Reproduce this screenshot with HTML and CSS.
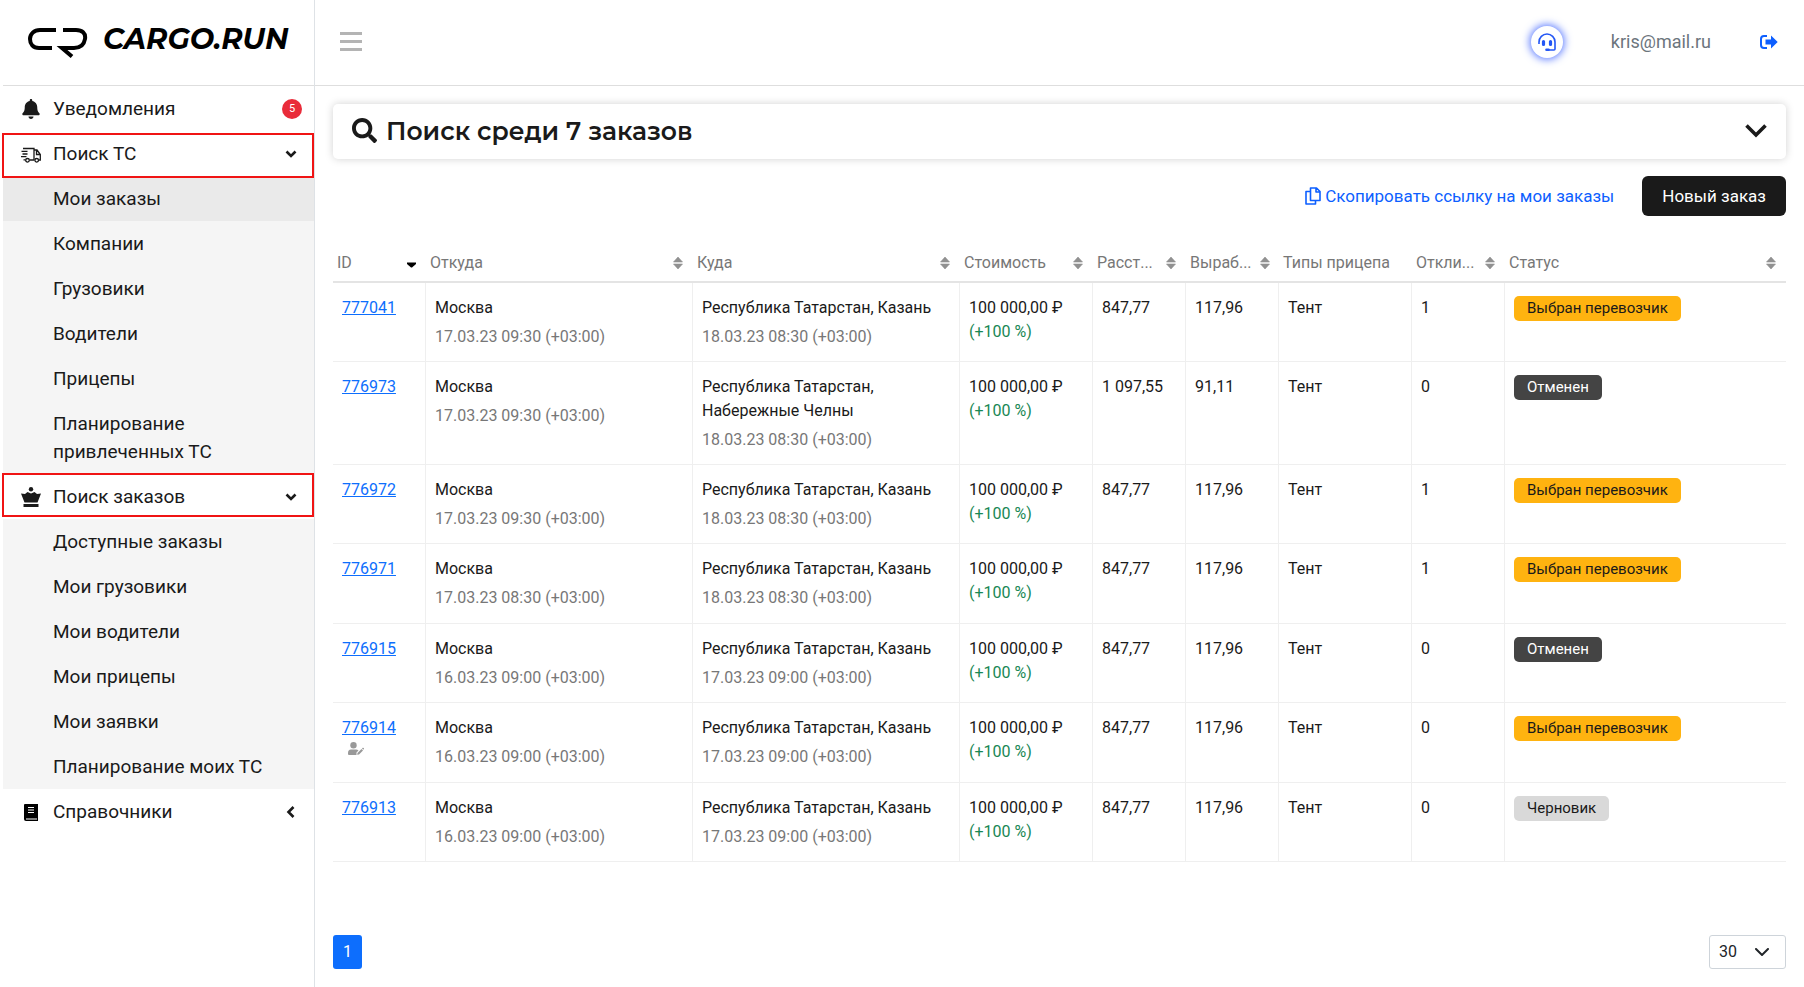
FILE: index.html
```html
<!DOCTYPE html>
<html lang="ru">
<head>
<meta charset="utf-8">
<title>CARGO.RUN — Мои заказы</title>
<link rel="stylesheet" href="styles.css">
</head>
<body>
<svg class="sprite" aria-hidden="true">
  <symbol id="sort" viewBox="0 0 10 12"><path d="M5 0 9.500 5H.5ZM5 12 .5 7h9Z" fill="currentColor" stroke="currentColor" stroke-width=".6" stroke-linejoin="round"/></symbol>
  <symbol id="down" viewBox="0 0 12 8"><path d="M1.500 1.500 6 6l4.500-4.500" fill="none" stroke="currentColor" stroke-width="2.600"/></symbol>
</svg>
<div class="app">
  <aside class="sidebar">
    <a class="logo" href="#">
      <svg class="logo-mark" viewBox="0 0 60 31" fill="none" stroke="#000" stroke-width="4"><path d="M28 3H12C6 3 2 7 2 12s3 9 9 9h13M35 3h13c6 0 10 3 9 9s-5 9-11 9H34l10 8.500"/></svg>
      <span>CARGO.RUN</span>
    </a>
    <nav class="menu">
      <a class="item" href="#"><svg class="icon" viewBox="0 0 448 512" fill="currentColor"><path d="M224 512c35.320 0 63.970-28.650 63.970-64H160.030c0 35.350 28.650 64 63.970 64zm215.390-149.710c-19.320-20.760-55.470-51.990-55.470-154.290 0-77.700-54.480-139.900-127.940-155.160V32c0-17.670-14.320-32-31.980-32s-31.980 14.330-31.980 32v20.840C118.560 68.100 64.080 130.300 64.080 208c0 102.300-36.150 133.530-55.470 154.290-6 6.450-8.660 14.160-8.610 21.710.11 16.400 12.980 32 32.100 32h383.800c19.120 0 32-15.600 32.100-32 .05-7.550-2.610-15.270-8.610-21.710z"/></svg><span>Уведомления</span><span class="count">5</span></a>
      <button class="item marked marked-low" type="button"><svg class="icon" viewBox="0 0 20 20" fill="none" stroke="currentColor" stroke-width="1.300"><path d="M2 4.500h11v11.500M0.500 7.300h6M1.500 10h5M0 12.700h5.500M2.500 15.800h2M8.500 16h5M13 6h3l3.300 4.500V16h-1.500M15.500 6.500v4h3.500"/><circle cx="6.500" cy="16.300" r="1.800"/><circle cx="15.700" cy="16.300" r="1.800"/></svg><span>Поиск ТС</span><svg class="arrow"><use href="#down"/></svg></button>
      <div class="submenu">
        <a class="item active" href="#">Мои заказы</a>
        <a class="item" href="#">Компании</a>
        <a class="item" href="#">Грузовики</a>
        <a class="item" href="#">Водители</a>
        <a class="item" href="#">Прицепы</a>
        <a class="item" href="#">Планирование привлеченных ТС</a>
      </div>
      <button class="item marked marked-high" type="button"><svg class="icon" viewBox="0 0 20 20" fill="currentColor"><circle cx="10" cy="2.200" r="2.200"/><path d="M0 6.500 4 7l2.500-2L10 6.500l3.500-1.500L16 7l4-.5L16.500 15.500h-13ZM2.500 17h15v3h-15Z"/></svg><span>Поиск заказов</span><svg class="arrow"><use href="#down"/></svg></button>
      <div class="submenu">
        <a class="item" href="#">Доступные заказы</a>
        <a class="item" href="#">Мои грузовики</a>
        <a class="item" href="#">Мои водители</a>
        <a class="item" href="#">Мои прицепы</a>
        <a class="item" href="#">Мои заявки</a>
        <a class="item" href="#">Планирование моих ТС</a>
      </div>
      <button class="item" type="button"><svg class="icon" viewBox="0 0 20 20"><path d="M4 2h13v17H5q-2 0-2-2V3q0-1 1-1Z" fill="#000"/><path d="M7 5.500h6M7 8h6M7 10.500h6M5 17h11" stroke="#fff" stroke-width="1.200"/></svg><span>Справочники</span><svg class="arrow" viewBox="0 0 12 12"><path d="M8.500 1 3.500 6l5 5" fill="none" stroke="currentColor" stroke-width="2.600"/></svg></button>
    </nav>
  </aside>
  <div class="page">
    <header class="topbar">
      <button class="burger" type="button" aria-label="Меню"><i></i><i></i><i></i></button>
      <button class="support" type="button" aria-label="Поддержка"><svg viewBox="0 0 20 20" fill="none" stroke="currentColor" stroke-width="1.600"><path d="M2 12V10a8 8 0 0 1 16 0V17q0 1-1 1h-6"/><path d="M6.500 9.500v3M13.500 9.500v3" stroke-width="3.200" stroke-linecap="round"/><path d="M9.500 17.700h2" stroke-width="2.600" stroke-linecap="round"/></svg></button>
      <span class="email">kris@mail.ru</span>
      <a class="logout" href="#" aria-label="Выйти"><svg viewBox="0 0 18 14"><path d="M7 1H4Q1 1 1 4v6q0 3 3 3h3" fill="none" stroke="currentColor" stroke-width="2"/><path d="M5.500 4.500H11V.5L17.700 7 11 13.500v-4H5.500Z" fill="currentColor"/></svg></a>
    </header>
    <main class="content">
      <button class="search" type="button">
        <svg class="lens" viewBox="0 0 512 512" fill="currentColor"><path d="M505 442.700L405.300 343c-4.500-4.500-10.600-7-17-7H372c27.600-35.300 44-79.700 44-128C416 93.100 322.900 0 208 0S0 93.100 0 208s93.100 208 208 208c48.300 0 92.700-16.400 128-44v16.300c0 6.400 2.500 12.500 7 17l99.700 99.700c9.400 9.400 24.600 9.400 33.900 0l28.300-28.300c9.400-9.400 9.400-24.600.1-34zM208 336c-70.700 0-128-57.200-128-128 0-70.700 57.200-128 128-128 70.700 0 128 57.200 128 128 0 70.700-57.200 128-128 128z"/></svg>
        <span>Поиск среди 7 заказов</span>
        <svg class="expand" viewBox="0 0 22 14" fill="none" stroke="currentColor" stroke-width="3.600"><path d="m1.500 1.500 9.500 9.500 9.500-9.500"/></svg>
      </button>
      <div class="actions">
        <a class="copy" href="#"><svg viewBox="0 0 16 18" fill="none" stroke="currentColor" stroke-width="1.600" stroke-linejoin="round"><path d="M5.500 1h6L15 4.500v9H5.500ZM11 1v4h4M5.500 4.500H1V17h9.500v-3.500"/></svg>Скопировать ссылку на мои заказы</a>
        <button class="create" type="button">Новый заказ</button>
      </div>
      <table class="orders">
        <colgroup><col class="c-id"><col class="c-place"><col class="c-place"><col class="c-mid"><col class="c-small"><col class="c-small"><col class="c-mid"><col class="c-small"><col></colgroup>
        <thead><tr>
          <th><div><span>ID</span><svg class="sorted" viewBox="0 0 9 6"><path d="M0 .5h9V2L5 5.500H4L0 2Z"/></svg></div></th>
          <th><div><span>Откуда</span><svg class="sort"><use href="#sort"/></svg></div></th>
          <th><div><span>Куда</span><svg class="sort"><use href="#sort"/></svg></div></th>
          <th><div><span>Стоимость</span><svg class="sort"><use href="#sort"/></svg></div></th>
          <th><div><span>Расст...</span><svg class="sort"><use href="#sort"/></svg></div></th>
          <th><div><span>Выраб...</span><svg class="sort"><use href="#sort"/></svg></div></th>
          <th><div><span>Типы прицепа</span></div></th>
          <th><div><span>Откли...</span><svg class="sort"><use href="#sort"/></svg></div></th>
          <th><div><span>Статус</span><svg class="sort"><use href="#sort"/></svg></div></th>
        </tr></thead>
        <tbody>
          <tr><td><a href="#">777041</a></td><td>Москва<time>17.03.23 09:30 (+03:00)</time></td><td>Республика Татарстан, Казань<time>18.03.23 08:30 (+03:00)</time></td><td>100 000,00 ₽<em>(+100 %)</em></td><td>847,77</td><td>117,96</td><td>Тент</td><td>1</td><td><span class="tag chosen">Выбран перевозчик</span></td></tr>
          <tr><td><a href="#">776973</a></td><td>Москва<time>17.03.23 09:30 (+03:00)</time></td><td>Республика Татарстан, Набережные Челны<time>18.03.23 08:30 (+03:00)</time></td><td>100 000,00 ₽<em>(+100 %)</em></td><td>1 097,55</td><td>91,11</td><td>Тент</td><td>0</td><td><span class="tag cancelled">Отменен</span></td></tr>
          <tr><td><a href="#">776972</a></td><td>Москва<time>17.03.23 09:30 (+03:00)</time></td><td>Республика Татарстан, Казань<time>18.03.23 08:30 (+03:00)</time></td><td>100 000,00 ₽<em>(+100 %)</em></td><td>847,77</td><td>117,96</td><td>Тент</td><td>1</td><td><span class="tag chosen">Выбран перевозчик</span></td></tr>
          <tr><td><a href="#">776971</a></td><td>Москва<time>17.03.23 08:30 (+03:00)</time></td><td>Республика Татарстан, Казань<time>18.03.23 08:30 (+03:00)</time></td><td>100 000,00 ₽<em>(+100 %)</em></td><td>847,77</td><td>117,96</td><td>Тент</td><td>1</td><td><span class="tag chosen">Выбран перевозчик</span></td></tr>
          <tr><td><a href="#">776915</a></td><td>Москва<time>16.03.23 09:00 (+03:00)</time></td><td>Республика Татарстан, Казань<time>17.03.23 09:00 (+03:00)</time></td><td>100 000,00 ₽<em>(+100 %)</em></td><td>847,77</td><td>117,96</td><td>Тент</td><td>0</td><td><span class="tag cancelled">Отменен</span></td></tr>
          <tr><td><a href="#">776914</a><svg class="editor" viewBox="0 0 16 13" fill="currentColor"><circle cx="5.500" cy="3.200" r="3.200"/><path d="M3 7.500h5q1.500 0 2.500 1L8.500 10.500V13H1q-1 0-1-1v-1q0-3.500 3-3.500ZM9.500 11l4-4L15 8.500l-4 4-1.800.3ZM14 6.500l.7-.7q.5-.3 1 .2t.2 1l-.7.700Z"/></svg></td><td>Москва<time>16.03.23 09:00 (+03:00)</time></td><td>Республика Татарстан, Казань<time>17.03.23 09:00 (+03:00)</time></td><td>100 000,00 ₽<em>(+100 %)</em></td><td>847,77</td><td>117,96</td><td>Тент</td><td>0</td><td><span class="tag chosen">Выбран перевозчик</span></td></tr>
          <tr><td><a href="#">776913</a></td><td>Москва<time>16.03.23 09:00 (+03:00)</time></td><td>Республика Татарстан, Казань<time>17.03.23 09:00 (+03:00)</time></td><td>100 000,00 ₽<em>(+100 %)</em></td><td>847,77</td><td>117,96</td><td>Тент</td><td>0</td><td><span class="tag draft">Черновик</span></td></tr>
        </tbody>
      </table>
      <footer class="pager">
        <button class="page-number" type="button">1</button>
        <div class="size"><select aria-label="Строк на странице"><option>30</option></select><svg viewBox="0 0 14 8" fill="none" stroke="currentColor" stroke-width="2" stroke-linecap="round"><path d="m1 1 6 6 6-6"/></svg></div>
      </footer>
    </main>
  </div>
</div>
</body>
</html>
```
FILE: styles.css
```css
* { box-sizing: border-box; }
body {
  margin: 0;
  background: #fff;
  color: #1a1a1a;
  font: 16px/24px Roboto, "Liberation Sans", sans-serif;
}
button, select { font: inherit; color: inherit; }
button { border: 0; background: none; padding: 0; cursor: pointer; }
a { color: #0d5fff; text-decoration: none; }
svg { flex: none; }
.sprite { display: none; }

.app { display: flex; min-height: 100vh; }
.sidebar {
  width: 315px;
  flex: none;
  padding-left: 3px;
  border-right: 1px solid #dee2e6;
}
.logo {
  display: flex;
  gap: 15px;
  height: 86px;
  padding: 22px 0 0 25px;
  border-bottom: 1px solid #dedede;
  color: #000;
  font: italic 700 29px/34px Montserrat, Inter, sans-serif;
}
.logo-mark { width: 60px; height: 31px; margin-top: 5px; }

.item {
  display: flex;
  align-items: center;
  gap: 12px;
  width: 100%;
  padding: 9px 17px 8px 18px;
  color: #1a1a1a;
  font-size: 19px;
  line-height: 28px;
  text-align: left;
}
.icon { width: 20px; height: 20px; }
.arrow { width: 12px; height: 12px; margin-left: auto; }
.count {
  width: 20px;
  height: 20px;
  margin: 0 -5px 0 auto;
  border-radius: 50%;
  background: #e92c3a;
  color: #fff;
  font-size: 11px;
  line-height: 20px;
  text-align: center;
}
.submenu { background: #f5f5f5; }
.submenu .item { padding-left: 50px; padding-right: 40px; }
.submenu .active { background: #eaeaea; }
.marked { position: relative; }
.marked::after {
  content: "";
  position: absolute;
  left: -1px;
  right: 0;
  border: 2px solid #f01414;
}
.marked-low::after { top: 2px; bottom: -2px; }
.marked-high::after { top: -1px; bottom: 2px; }

.page { flex: 1; min-width: 0; display: flex; flex-direction: column; }
.topbar {
  display: flex;
  align-items: center;
  height: 86px;
  padding: 0 26px 2px 25px;
  border-bottom: 1px solid #dedede;
}
.burger { display: grid; gap: 5px; width: 22px; margin-right: auto; }
.burger i { height: 3px; background: #b4b4b4; }
.support {
  display: grid;
  place-items: center;
  width: 32px;
  height: 32px;
  margin-right: 48px;
  border-radius: 50%;
  box-shadow: 0 0 8px 1px #4d6fff;
  color: #2457f5;
}
.support svg { width: 20px; height: 20px; }
.email { margin-right: 49px; color: #6c757d; font-size: 18px; }
.logout { display: flex; }
.logout svg { width: 18px; height: 14px; }

.content {
  flex: 1;
  display: flex;
  flex-direction: column;
  padding: 18px 18px 18px;
}
.search {
  display: flex;
  align-items: center;
  gap: 9px;
  height: 55px;
  padding: 0 19px 2px 19px;
  border-radius: 5px;
  box-shadow: 0 0 8px rgba(0, 0, 0, .18);
  font: 600 25px/32px Montserrat, Inter, sans-serif;
}
.lens { width: 25px; height: 25px; }
.expand { width: 22px; height: 14px; margin-left: auto; }

.actions {
  display: flex;
  justify-content: flex-end;
  align-items: center;
  gap: 28px;
  margin: 17px 0 28px;
}
.copy { display: flex; align-items: center; gap: 4px; font-size: 17px; }
.copy svg { width: 16px; height: 18px; }
.create {
  height: 40px;
  padding: 0 20px;
  border-radius: 6px;
  background: #1a1a1a;
  color: #fff;
  font-size: 17px;
}

.orders { width: 100%; table-layout: fixed; border-spacing: 0; }
.c-id { width: 93px; }
.c-place { width: 267px; }
.c-mid { width: 133px; }
.c-small { width: 93px; }
.orders th {
  height: 39px;
  padding: 0 10px 0 4px;
  border-bottom: 2px solid #e4e4e4;
  color: #777;
  font-weight: 400;
  text-align: left;
}
.orders th div { display: flex; align-items: center; justify-content: space-between; gap: 8px; }
.orders th span { white-space: nowrap; }
.sort { width: 10px; height: 12px; color: #919191; }
.sorted { width: 9px; height: 6px; margin-top: 5px; color: #000; }
.orders td {
  height: 79px;
  padding: 13px 8px 12px 9px;
  border-bottom: 1px solid #efefef;
  border-right: 1px solid #efefef;
  vertical-align: top;
}
.orders tr:nth-child(even) td { height: 80px; }
.orders td:last-child { border-right: 0; }
.orders td a { color: #0d6efd; text-decoration: underline; }
.orders time { display: block; margin-top: 5px; color: #777; }
.orders em { display: block; color: #198754; font-style: normal; }
.editor { display: block; width: 16px; height: 13px; margin: 2px 0 0 6px; color: #999; }
.tag {
  display: inline-block;
  padding: 0 13px;
  border-radius: 5px;
  font-size: 15px;
  line-height: 25px;
}
.chosen { background: #ffb310; }
.cancelled { background: #444; color: #fff; }
.draft { background: #d9d9d9; }

.pager { display: flex; justify-content: space-between; margin-top: auto; }
.page-number { width: 29px; height: 34px; border-radius: 3px; background: #0d6efd; color: #fff; }
.size { position: relative; color: #212529; }
.size select {
  appearance: none;
  width: 77px;
  height: 34px;
  padding: 0 9px;
  border: 1px solid #ced4da;
  border-radius: 3px;
  background: #fff;
}
.size svg { position: absolute; top: 13px; right: 17px; width: 14px; height: 8px; pointer-events: none; }
```
